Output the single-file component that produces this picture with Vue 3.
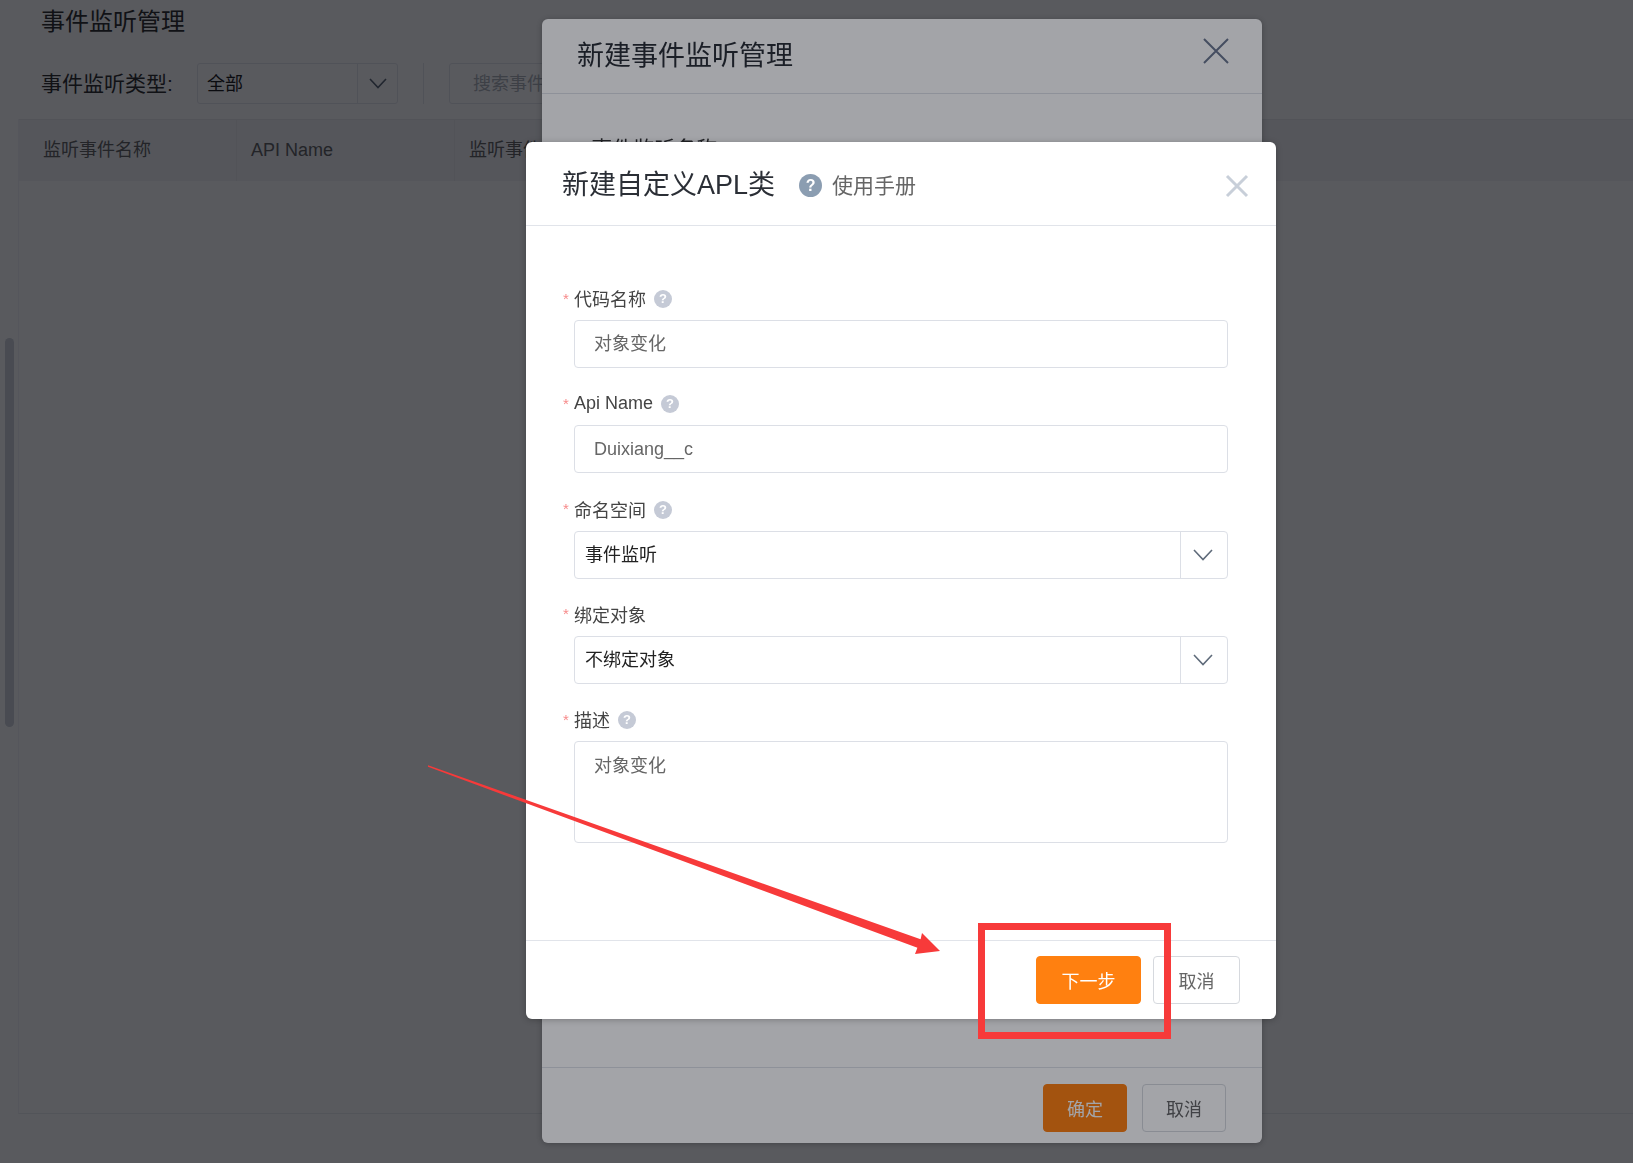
<script setup>
const columns = ['监听事件名称', 'API Name', '监听事件类型']

const fields = [
  { label: '代码名称', type: 'input', value: '对象变化', help: true },
  { label: 'Api Name', type: 'input', value: 'Duixiang__c', help: true },
  { label: '命名空间', type: 'select', value: '事件监听', help: true },
  { label: '绑定对象', type: 'select', value: '不绑定对象', help: false },
  { label: '描述', type: 'textarea', value: '对象变化', help: true }
]
</script>

<template>
  <div class="page">
    <div class="scrollbar"></div>
    <h1 class="page-title">事件监听管理</h1>
    <div class="filters">
      <span class="filter-label">事件监听类型:</span>
      <div class="filter-select">
        <span class="filter-value">全部</span>
        <span class="filter-arrow">
          <svg width="18" height="11" viewBox="0 0 18 11"><polyline points="1,1 9,9.5 17,1" /></svg>
        </span>
      </div>
      <span class="filter-divider"></span>
      <div class="search">搜索事件监听名称</div>
    </div>
    <div class="table">
      <div class="table-head">
        <div v-for="col in columns" :key="col" class="table-cell">{{ col }}</div>
        <div class="table-cell table-cell-rest"></div>
      </div>
    </div>
  </div>

  <div class="mask mask-first"></div>

  <section class="modal modal-back">
    <header class="back-header">
      <h2 class="modal-title">新建事件监听管理</h2>
      <svg class="back-close" width="28" height="28" viewBox="0 0 28 28">
        <path d="M2 2 L26 26 M26 2 L2 26" />
      </svg>
    </header>
    <div class="back-body">
      <div class="back-label"><span class="back-star">*</span>事件监听名称</div>
    </div>
    <footer class="back-footer">
      <button class="btn btn-primary btn-back">确定</button>
      <button class="btn btn-back">取消</button>
    </footer>
  </section>

  <div class="mask mask-second"></div>

  <section class="modal modal-front">
    <header class="front-header">
      <h2 class="modal-title">新建自定义APL类</h2>
      <span class="manual-icon">?</span>
      <span class="manual-text">使用手册</span>
      <svg class="front-close" width="24" height="24" viewBox="0 0 24 24">
        <path d="M2 2 L22 22 M22 2 L2 22" />
      </svg>
    </header>
    <div class="form">
      <div v-for="field in fields" :key="field.label" class="field">
        <div class="field-label">
          <span class="star">*</span>
          <span>{{ field.label }}</span>
          <span v-if="field.help" class="help">?</span>
        </div>
        <div v-if="field.type === 'input'" class="control control-input">{{ field.value }}</div>
        <div v-else-if="field.type === 'select'" class="control control-select">
          <span class="select-value">{{ field.value }}</span>
          <span class="select-arrow">
            <svg width="20" height="12" viewBox="0 0 20 12"><polyline points="1,1 10,10.5 19,1" /></svg>
          </span>
        </div>
        <div v-else class="control control-textarea">{{ field.value }}</div>
      </div>
    </div>
    <footer class="front-footer">
      <button class="btn btn-primary btn-next">下一步</button>
      <button class="btn btn-cancel">取消</button>
    </footer>
  </section>

  <!-- red annotation drawn on top of the screenshot -->
  <svg class="arrow" width="1633" height="1163" viewBox="0 0 1633 1163">
    <polygon points="428,765.3 920.6,939.2 922,933 940,951 915,954 917.4,947.8 428,766.8" />
  </svg>
  <div class="mark"></div>
</template>

<style scoped>
.page {
  position: relative;
  width: 1633px;
  height: 1163px;
  overflow: hidden;
  background: #fff;
  color: #333;
}

.scrollbar {
  position: absolute;
  left: 5px;
  top: 338px;
  width: 9px;
  height: 389px;
  border-radius: 5px;
  background: #cfd4dc;
}

.page-title {
  margin: 0 0 0 41px;
  height: 44px;
  font-size: 24px;
  line-height: 44px;
  font-weight: 400;
}

.filters {
  display: flex;
  align-items: center;
  height: 41px;
  margin: 19px 0 15px 41px;
}

.filter-label {
  width: 156px;
  padding-bottom: 4px;
  font-size: 21px;
}

.filter-select {
  display: flex;
  align-items: center;
  box-sizing: border-box;
  width: 201px;
  height: 41px;
  border: 1px solid #e6e8ed;
  border-radius: 3px;
}

.filter-value {
  flex: 1;
  padding: 0 0 3px 9px;
  font-size: 18px;
  color: #222;
}

.filter-arrow {
  display: flex;
  align-items: center;
  justify-content: center;
  width: 39px;
  height: 100%;
  border-left: 1px solid #e6e8ed;
}

.filter-arrow polyline,
.select-arrow polyline {
  fill: none;
  stroke: #5f6b7a;
  stroke-width: 1.6;
}

.filter-divider {
  width: 1px;
  height: 41px;
  margin: 0 25px;
  background: #e6e8ed;
}

.search {
  box-sizing: border-box;
  width: 320px;
  height: 41px;
  padding-left: 23px;
  border: 1px solid #e6e8ed;
  border-radius: 3px;
  font-size: 18px;
  line-height: 40px;
  color: #b0b4bc;
}

.table {
  box-sizing: border-box;
  height: 995px;
  margin-left: 18px;
  border-left: 1px solid #f4f5f7;
  border-bottom: 1px solid #eceef1;
}

.table-head {
  display: flex;
  height: 61px;
  background: #f2f4f6;
  border-top: 1px solid #e9ebef;
}

.table-cell {
  box-sizing: border-box;
  width: 218px;
  padding-left: 14px;
  border-right: 1px solid #e9ebef;
  font-size: 18px;
  line-height: 60px;
  color: #666;
}

.table-cell:first-child {
  padding-left: 24px;
}

.table-cell-rest {
  flex: 1;
  border-right: 0;
}

.mask {
  position: fixed;
  inset: 0;
}

.mask-first {
  background: rgba(0, 0, 0, 0.45);
}

.mask-second {
  background: rgba(0, 2, 13, 0.36);
}

.modal {
  position: absolute;
  display: flex;
  flex-direction: column;
  box-sizing: border-box;
  border-radius: 6px;
  background: #fff;
}

.modal-back {
  left: 542px;
  top: 19px;
  width: 720px;
  height: 1124px;
  box-shadow: 0 1px 6px rgba(0, 0, 0, 0.25);
}

.modal-front {
  left: 526px;
  top: 142px;
  width: 750px;
  height: 877px;
  box-shadow: 0 1px 6px rgba(0, 0, 0, 0.25);
}

.modal-title {
  margin: 0;
  font-size: 27px;
  font-weight: 400;
  color: #2b2f36;
}

.back-header {
  display: flex;
  align-items: center;
  justify-content: space-between;
  box-sizing: border-box;
  height: 75px;
  padding: 0 32px 5px 35px;
  border-bottom: 1px solid #dfe2e8;
}

.back-close {
  margin-bottom: 6px;
}

.back-close path {
  fill: none;
  stroke: #6d7890;
  stroke-width: 2;
}

.back-body {
  flex: 1;
  padding: 39px 0 0 35px;
}

.back-label {
  font-size: 21px;
  line-height: 32px;
  color: #333;
}

.back-star {
  margin-right: 6px;
  color: #f56c6c;
}

.back-footer {
  display: flex;
  justify-content: flex-end;
  gap: 15px;
  height: 76px;
  padding: 16px 36px 0 0;
  box-sizing: border-box;
  border-top: 1px solid #dfe2e8;
}

.btn {
  box-sizing: border-box;
  height: 48px;
  padding: 0;
  border: 1px solid #d6d9de;
  border-radius: 4px;
  background: #fff;
  font-family: inherit;
  font-size: 18px;
  color: #666;
}

.btn-primary {
  border-color: #ff8010;
  background: #ff8010;
  color: #fff;
}

.btn-back {
  width: 84px;
}

.btn-next {
  width: 105px;
}

.btn-cancel {
  width: 87px;
}

.front-header {
  display: flex;
  align-items: center;
  box-sizing: border-box;
  height: 84px;
  padding: 0 27px 3px 36px;
  border-bottom: 1px solid #e1e4ea;
}

.manual-icon {
  width: 23px;
  height: 23px;
  margin: 6px 10px 0 24px;
  border-radius: 50%;
  background: #8b9db1;
  font-size: 16px;
  font-weight: 700;
  line-height: 23px;
  text-align: center;
  color: #fff;
}

.manual-text {
  flex: 1;
  margin-top: 4px;
  font-size: 21px;
  color: #666;
}

.front-close {
  margin-top: 8px;
}

.front-close path {
  fill: none;
  stroke: #c8cfd9;
  stroke-width: 3;
}

.form {
  flex: 1;
  padding: 59px 48px 0;
}

.field {
  margin-bottom: 22.3px;
}

.field-label {
  display: flex;
  align-items: center;
  height: 26px;
  margin: 0 0 9px -12px;
  font-size: 18px;
  color: #444;
}

.star {
  box-sizing: border-box;
  width: 12px;
  padding-left: 1px;
  font-size: 15px;
  color: #f78989;
}

.help {
  width: 18px;
  height: 18px;
  margin: 2px 0 0 8px;
  border-radius: 50%;
  background: #c5cad6;
  font-size: 13px;
  font-weight: 700;
  line-height: 18px;
  text-align: center;
  color: #fff;
}

.control {
  box-sizing: border-box;
  border: 1px solid #dcdfe6;
  border-radius: 4px;
  font-size: 18px;
  color: #666;
}

.control-input {
  height: 48px;
  padding-left: 19px;
  line-height: 46px;
}

.control-select {
  display: flex;
  align-items: center;
  height: 48px;
  color: #222;
}

.select-value {
  flex: 1;
  padding: 0 0 4px 10px;
}

.select-arrow {
  display: flex;
  align-items: center;
  justify-content: center;
  box-sizing: border-box;
  width: 47px;
  height: 46px;
  padding-right: 3px;
  border-left: 1px solid #dcdfe6;
}

.control-textarea {
  height: 102px;
  padding: 10px 19px;
  line-height: 28px;
}

.front-footer {
  display: flex;
  justify-content: flex-end;
  gap: 12px;
  box-sizing: border-box;
  height: 79px;
  padding: 15px 36px 0 0;
  border-top: 1px solid #e1e4ea;
}

.arrow {
  position: absolute;
  left: 0;
  top: 0;
  pointer-events: none;
}

.arrow polygon {
  fill: #f73a3a;
}

.mark {
  position: absolute;
  left: 978px;
  top: 923px;
  box-sizing: border-box;
  width: 193px;
  height: 116px;
  border: 7px solid #f73a3a;
  pointer-events: none;
}
</style>

<style>
html,
body {
  margin: 0;
  overflow: hidden;
}

#app {
  font-family: "Liberation Sans", "Noto Sans CJK SC", sans-serif;
}
</style>
